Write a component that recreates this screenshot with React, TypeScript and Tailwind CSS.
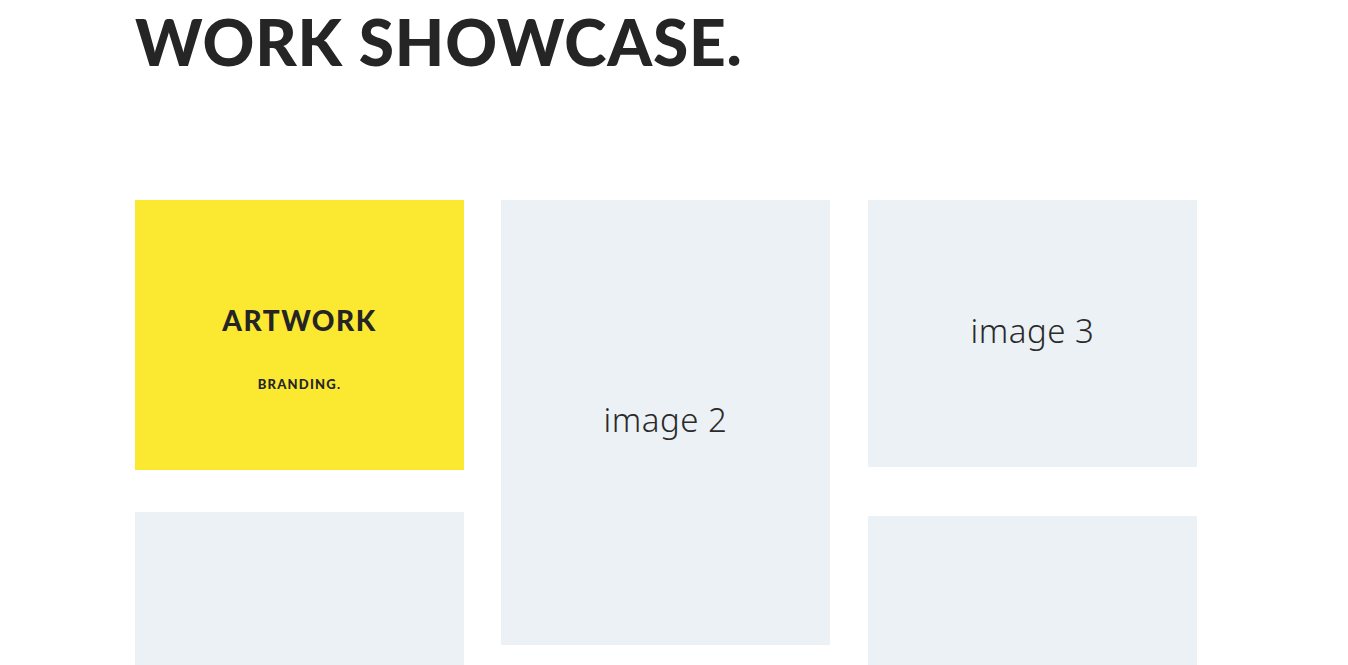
const columns = [
  [
    { kind: "feature", h: "h-[270px]" },
    { kind: "blank", h: "h-[200px]" },
  ],
  [{ kind: "image", label: "image 2", h: "h-[445px]" }],
  [
    { kind: "image", label: "image 3", h: "h-[267px]" },
    { kind: "blank", h: "h-[200px]" },
  ],
];

export default function App() {
  return (
    <div className="min-h-screen bg-white overflow-hidden font-['Lato',sans-serif]">
      <div className="w-[1062px] ml-[135px]">
        <h1 className="text-[64px] leading-none font-black text-[#252525] tracking-[0.8px] pt-[10px]">
          WORK SHOWCASE.
        </h1>

        <div className="mt-[126px] flex">
          {columns.map((col, i) => (
            <div
              key={i}
              className={`w-[329px] flex flex-col ${i === 1 ? "ml-[37px]" : ""} ${i === 2 ? "ml-[38px] gap-[49px]" : "gap-[42px]"}`}
            >
              {col.map((item, j) =>
                item.kind === "feature" ? (
                  <div
                    key={j}
                    className={`${item.h} bg-[#fbe830] flex flex-col items-center pt-[106px] text-[#252525]`}
                  >
                    <div className="text-[28px] font-black tracking-[1.5px] leading-none">ARTWORK</div>
                    <div className="text-[13px] font-black tracking-[1.2px] leading-none mt-[44px]">BRANDING.</div>
                  </div>
                ) : item.kind === "image" ? (
                  <div
                    key={j}
                    className={`${item.h} bg-[#ecf1f5] flex items-center justify-center`}
                  >
                    <span className="text-[33px] font-light tracking-[0.5px] text-[#2a2a2a] font-['Noto_Sans',sans-serif] mt-[-6px]">
                      {item.label}
                    </span>
                  </div>
                ) : (
                  <div key={j} className={`${item.h} bg-[#ecf1f5]`} />
                )
              )}
            </div>
          ))}
        </div>
      </div>
    </div>
  );
}
